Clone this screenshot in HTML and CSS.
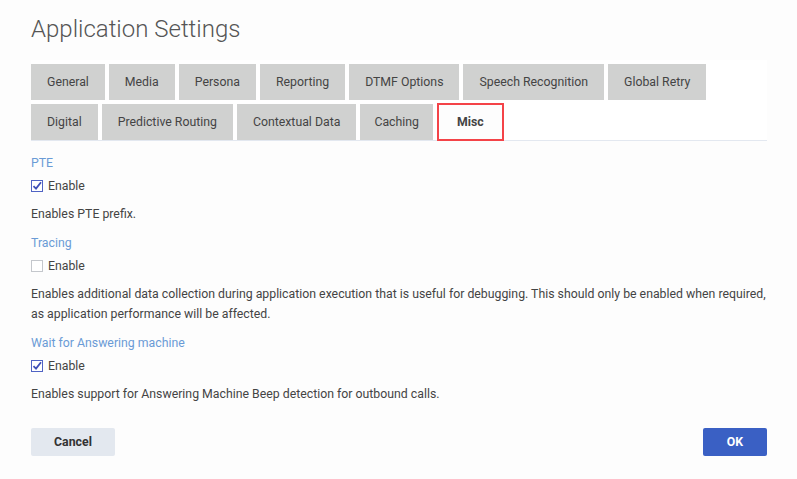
FILE: index.html
```html
<!DOCTYPE html>
<html lang="en">
<head>
    <meta charset="UTF-8">
    <title>Application Settings</title>
    <link rel="stylesheet" href="styles.css">
</head>
<body>
    <div class="dialog">
        <h1>Application Settings</h1>

        <div class="tabs">
            <div class="tab-row">
                <button class="tab">General</button>
                <button class="tab">Media</button>
                <button class="tab">Persona</button>
                <button class="tab">Reporting</button>
                <button class="tab">DTMF Options</button>
                <button class="tab">Speech Recognition</button>
                <button class="tab">Global Retry</button>
            </div>
            <div class="tab-row">
                <button class="tab">Digital</button>
                <button class="tab">Predictive Routing</button>
                <button class="tab">Contextual Data</button>
                <button class="tab narrow">Caching</button>
                <button class="tab active">Misc</button>
            </div>
        </div>

        <div class="setting first">
            <div class="setting-label">PTE</div>
            <label class="check">
                <span class="box checked">
                    <svg viewBox="0 0 12 12" width="12" height="12"><path d="M2.5 6.2 L5 8.6 L10 2.2" fill="none" stroke="#3f4fb8" stroke-width="1.8"/></svg>
                </span>
                Enable
            </label>
            <p class="setting-desc">Enables PTE prefix.</p>
        </div>

        <div class="setting">
            <div class="setting-label">Tracing</div>
            <label class="check">
                <span class="box"></span>
                Enable
            </label>
            <p class="setting-desc">Enables additional data collection during application execution that is useful for debugging. This should only be enabled when required, as application performance will be affected.</p>
        </div>

        <div class="setting">
            <div class="setting-label">Wait for Answering machine</div>
            <label class="check">
                <span class="box checked">
                    <svg viewBox="0 0 12 12" width="12" height="12"><path d="M2.5 6.2 L5 8.6 L10 2.2" fill="none" stroke="#3f4fb8" stroke-width="1.8"/></svg>
                </span>
                Enable
            </label>
            <p class="setting-desc">Enables support for Answering Machine Beep detection for outbound calls.</p>
        </div>

        <div class="footer">
            <button class="btn cancel-btn">Cancel</button>
            <button class="btn ok-btn">OK</button>
        </div>
    </div>
</body>
</html>
```

FILE: styles.css
```css
* {
    margin: 0;
    padding: 0;
    box-sizing: border-box;
    font-family: Roboto, "Liberation Sans", sans-serif;
}

body {
    background-color: #fdfdfd;
    color: #444;
    font-size: 12.3px;
}

.dialog {
    width: 797px;
    padding: 13px 30px 0 31px;
}

h1 {
    font-size: 24px;
    font-weight: 300;
    color: #555;
    line-height: 32px;
    margin-bottom: 15px;
}

.tabs {
    background-color: #fff;
    border-bottom: 1px solid #e3e8f0;
    padding-top: 4px;
    display: flex;
    flex-direction: column;
    gap: 4px;
}

.tab-row {
    display: flex;
    gap: 4px;
}

.tab {
    height: 36px;
    padding: 0 16px;
    border: none;
    background-color: #d0d1d0;
    color: #444;
    font-size: 12.3px;
    cursor: pointer;
}

.tab.narrow {
    padding: 0 14px;
}

.tab.active {
    background-color: #fdfdfd;
    border: 2.5px solid #f44348;
    height: 38px;
    margin-top: -1px;
    margin-bottom: -1px;
    padding: 0 18px;
    font-weight: bold;
}

.setting {
    margin-top: 9px;
}

.setting.first {
    margin-top: 12px;
}

.setting-label {
    color: #6a9bd6;
    line-height: 20px;
    margin-bottom: 3px;
}

.check {
    display: flex;
    align-items: center;
    gap: 5px;
    line-height: 20px;
}

.box {
    width: 12px;
    height: 12px;
    border: 1px solid #c4c7cc;
    background-color: #fff;
    display: flex;
}

.box.checked {
    border: 1.5px solid #5063c4;
}

.box svg {
    margin: -1.5px;
}

.setting-desc {
    margin-top: 8px;
    line-height: 20px;
}

.footer {
    display: flex;
    justify-content: space-between;
    margin-top: 24px;
}

.btn {
    height: 28px;
    border: none;
    border-radius: 2px;
    font-size: 12.3px;
    font-weight: bold;
    cursor: pointer;
}

.cancel-btn {
    width: 84px;
    background-color: #e3e8ef;
    color: #333;
}

.ok-btn {
    width: 64px;
    background-color: #3a60c4;
    color: #fff;
}
```
